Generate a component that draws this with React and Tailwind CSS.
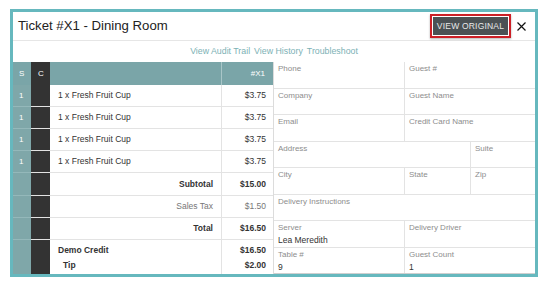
import React from "react";

const items = Array.from({ length: 4 }, () => ({ name: "1 x Fresh Fruit Cup", price: "$3.75" }));

function LeftRow({ children, price, h = "h-[22px]", s = "1" }) {
  return (
    <div className={`flex ${h} border-b border-[#e3e3e3]`}>
      <div className="w-[18px] bg-[#7fa7a9] text-white text-[8px] pl-[6px] flex items-center border-b border-[#94b8ba] -mb-px">{s}</div>
      <div className="w-[19px] bg-[#333333]"></div>
      {children}
      {price}
    </div>
  );
}

function Cell({ label, value, className = "" }) {
  return (
    <div className={`border-r border-[#e3e3e3] pl-[4px] pt-[3px] leading-none ${className}`}>
      <div className="text-[8px] text-[#8d8d8d]">{label}</div>
      {value && <div className="text-[8.5px] text-[#333] mt-[4px]">{value}</div>}
    </div>
  );
}

export default function App() {
  return (
    <div className="w-[548px] h-[282px] bg-white pl-[10px] pt-[9px] font-['Liberation_Sans',Arial,sans-serif]">
      <div className="w-[528px] h-[268px] border-[3px] border-[#66b8be] flex flex-col bg-white">
        {/* header */}
        <div className="h-[29px] border-b border-[#e6e6e6] flex items-center pl-[5px] pr-[9px]">
          <div className="text-[13.2px] text-[#222] flex-1">Ticket #X1 - Dining Room</div>
          <div className="border-2 border-[#cc1f26] p-px shadow-[0_1px_2px_rgba(0,0,0,0.3)]">
            <div className="bg-[#4b5154] text-[#e8e8e8] text-[8.5px] w-[75px] h-[18px] flex items-center justify-center tracking-[0.2px]">VIEW ORIGINAL</div>
          </div>
          <svg width="9" height="9" viewBox="0 0 9 9" className="ml-[6px]">
            <path d="M0.5 0.5 L8.5 8.5 M8.5 0.5 L0.5 8.5" stroke="#111" strokeWidth="1.2" />
          </svg>
        </div>
        {/* links */}
        <div className="h-[21px] flex items-center justify-center gap-[4px] text-[8.8px] text-[#7cb1b5]">
          <span>View Audit Trail</span>
          <span>View History</span>
          <span>Troubleshoot</span>
        </div>
        {/* body */}
        <div className="flex flex-1 min-h-0">
          <div className="w-[261px] flex flex-col text-[8.5px] text-[#333] border-r border-[#dcdcdc]">
            <div className="flex h-[23px] bg-[#7aa5a8] text-white text-[8px]">
              <div className="w-[18px] pl-[6px] flex items-center">S</div>
              <div className="w-[19px] bg-[#333333] pl-[7px] flex items-center">C</div>
              <div className="flex-1"></div>
              <div className="w-[52px] border-l border-[#a9c6c8] flex items-center justify-end pr-[8px]">#X1</div>
            </div>
            {items.map((it, i) => (
              <LeftRow key={i} price={<div className="w-[52px] border-l border-[#e3e3e3] flex items-center justify-end pr-[7px]">{it.price}</div>}>
                <div className="flex-1 pl-[8px] flex items-center">{it.name}</div>
              </LeftRow>
            ))}
            <LeftRow s="" h="h-[23px]" price={<div className="w-[52px] border-l border-[#e3e3e3] flex items-center justify-end pr-[7px] font-bold">$15.00</div>}>
              <div className="flex-1 pr-[8px] flex items-center justify-end font-bold">Subtotal</div>
            </LeftRow>
            <LeftRow s="" price={<div className="w-[52px] border-l border-[#e3e3e3] flex items-center justify-end pr-[7px] text-[#777]">$1.50</div>}>
              <div className="flex-1 pr-[8px] flex items-center justify-end text-[#777]">Sales Tax</div>
            </LeftRow>
            <LeftRow s="" price={<div className="w-[52px] border-l border-[#e3e3e3] flex items-center justify-end pr-[7px] font-bold">$16.50</div>}>
              <div className="flex-1 pr-[8px] flex items-center justify-end font-bold">Total</div>
            </LeftRow>
            <div className="flex flex-1">
              <div className="w-[18px] bg-[#7fa7a9]"></div>
              <div className="w-[19px] bg-[#333333]"></div>
              <div className="flex-1 pl-[8px] pt-[3px] font-bold leading-[15px]">
                <div>Demo Credit</div>
                <div className="pl-[5px]">Tip</div>
              </div>
              <div className="w-[52px] border-l border-[#e3e3e3] pr-[7px] pt-[3px] font-bold text-right leading-[15px]">
                <div>$16.50</div>
                <div>$2.00</div>
              </div>
            </div>
          </div>
          <div className="flex-1 grid grid-rows-8">
            <div className="flex border-b border-[#e3e3e3]">
              <Cell label="Phone" className="w-[131px]" />
              <Cell label="Guest #" className="flex-1 border-r-0" />
            </div>
            <div className="flex border-b border-[#e3e3e3]">
              <Cell label="Company" className="w-[131px]" />
              <Cell label="Guest Name" className="flex-1 border-r-0" />
            </div>
            <div className="flex border-b border-[#e3e3e3]">
              <Cell label="Email" className="w-[131px]" />
              <Cell label="Credit Card Name" className="flex-1 border-r-0" />
            </div>
            <div className="flex border-b border-[#e3e3e3]">
              <Cell label="Address" className="w-[197px]" />
              <Cell label="Suite" className="flex-1 border-r-0" />
            </div>
            <div className="flex border-b border-[#e3e3e3]">
              <Cell label="City" className="w-[131px]" />
              <Cell label="State" className="w-[66px]" />
              <Cell label="Zip" className="flex-1 border-r-0" />
            </div>
            <div className="flex border-b border-[#e3e3e3]">
              <Cell label="Delivery Instructions" className="flex-1 border-r-0" />
            </div>
            <div className="flex border-b border-[#e3e3e3]">
              <Cell label="Server" value="Lea Meredith" className="w-[131px]" />
              <Cell label="Delivery Driver" className="flex-1 border-r-0" />
            </div>
            <div className="flex border-b border-[#cfcfcf]">
              <Cell label="Table #" value="9" className="w-[131px]" />
              <Cell label="Guest Count" value="1" className="flex-1 border-r-0" />
            </div>
          </div>
        </div>
      </div>
    </div>
  );
}
